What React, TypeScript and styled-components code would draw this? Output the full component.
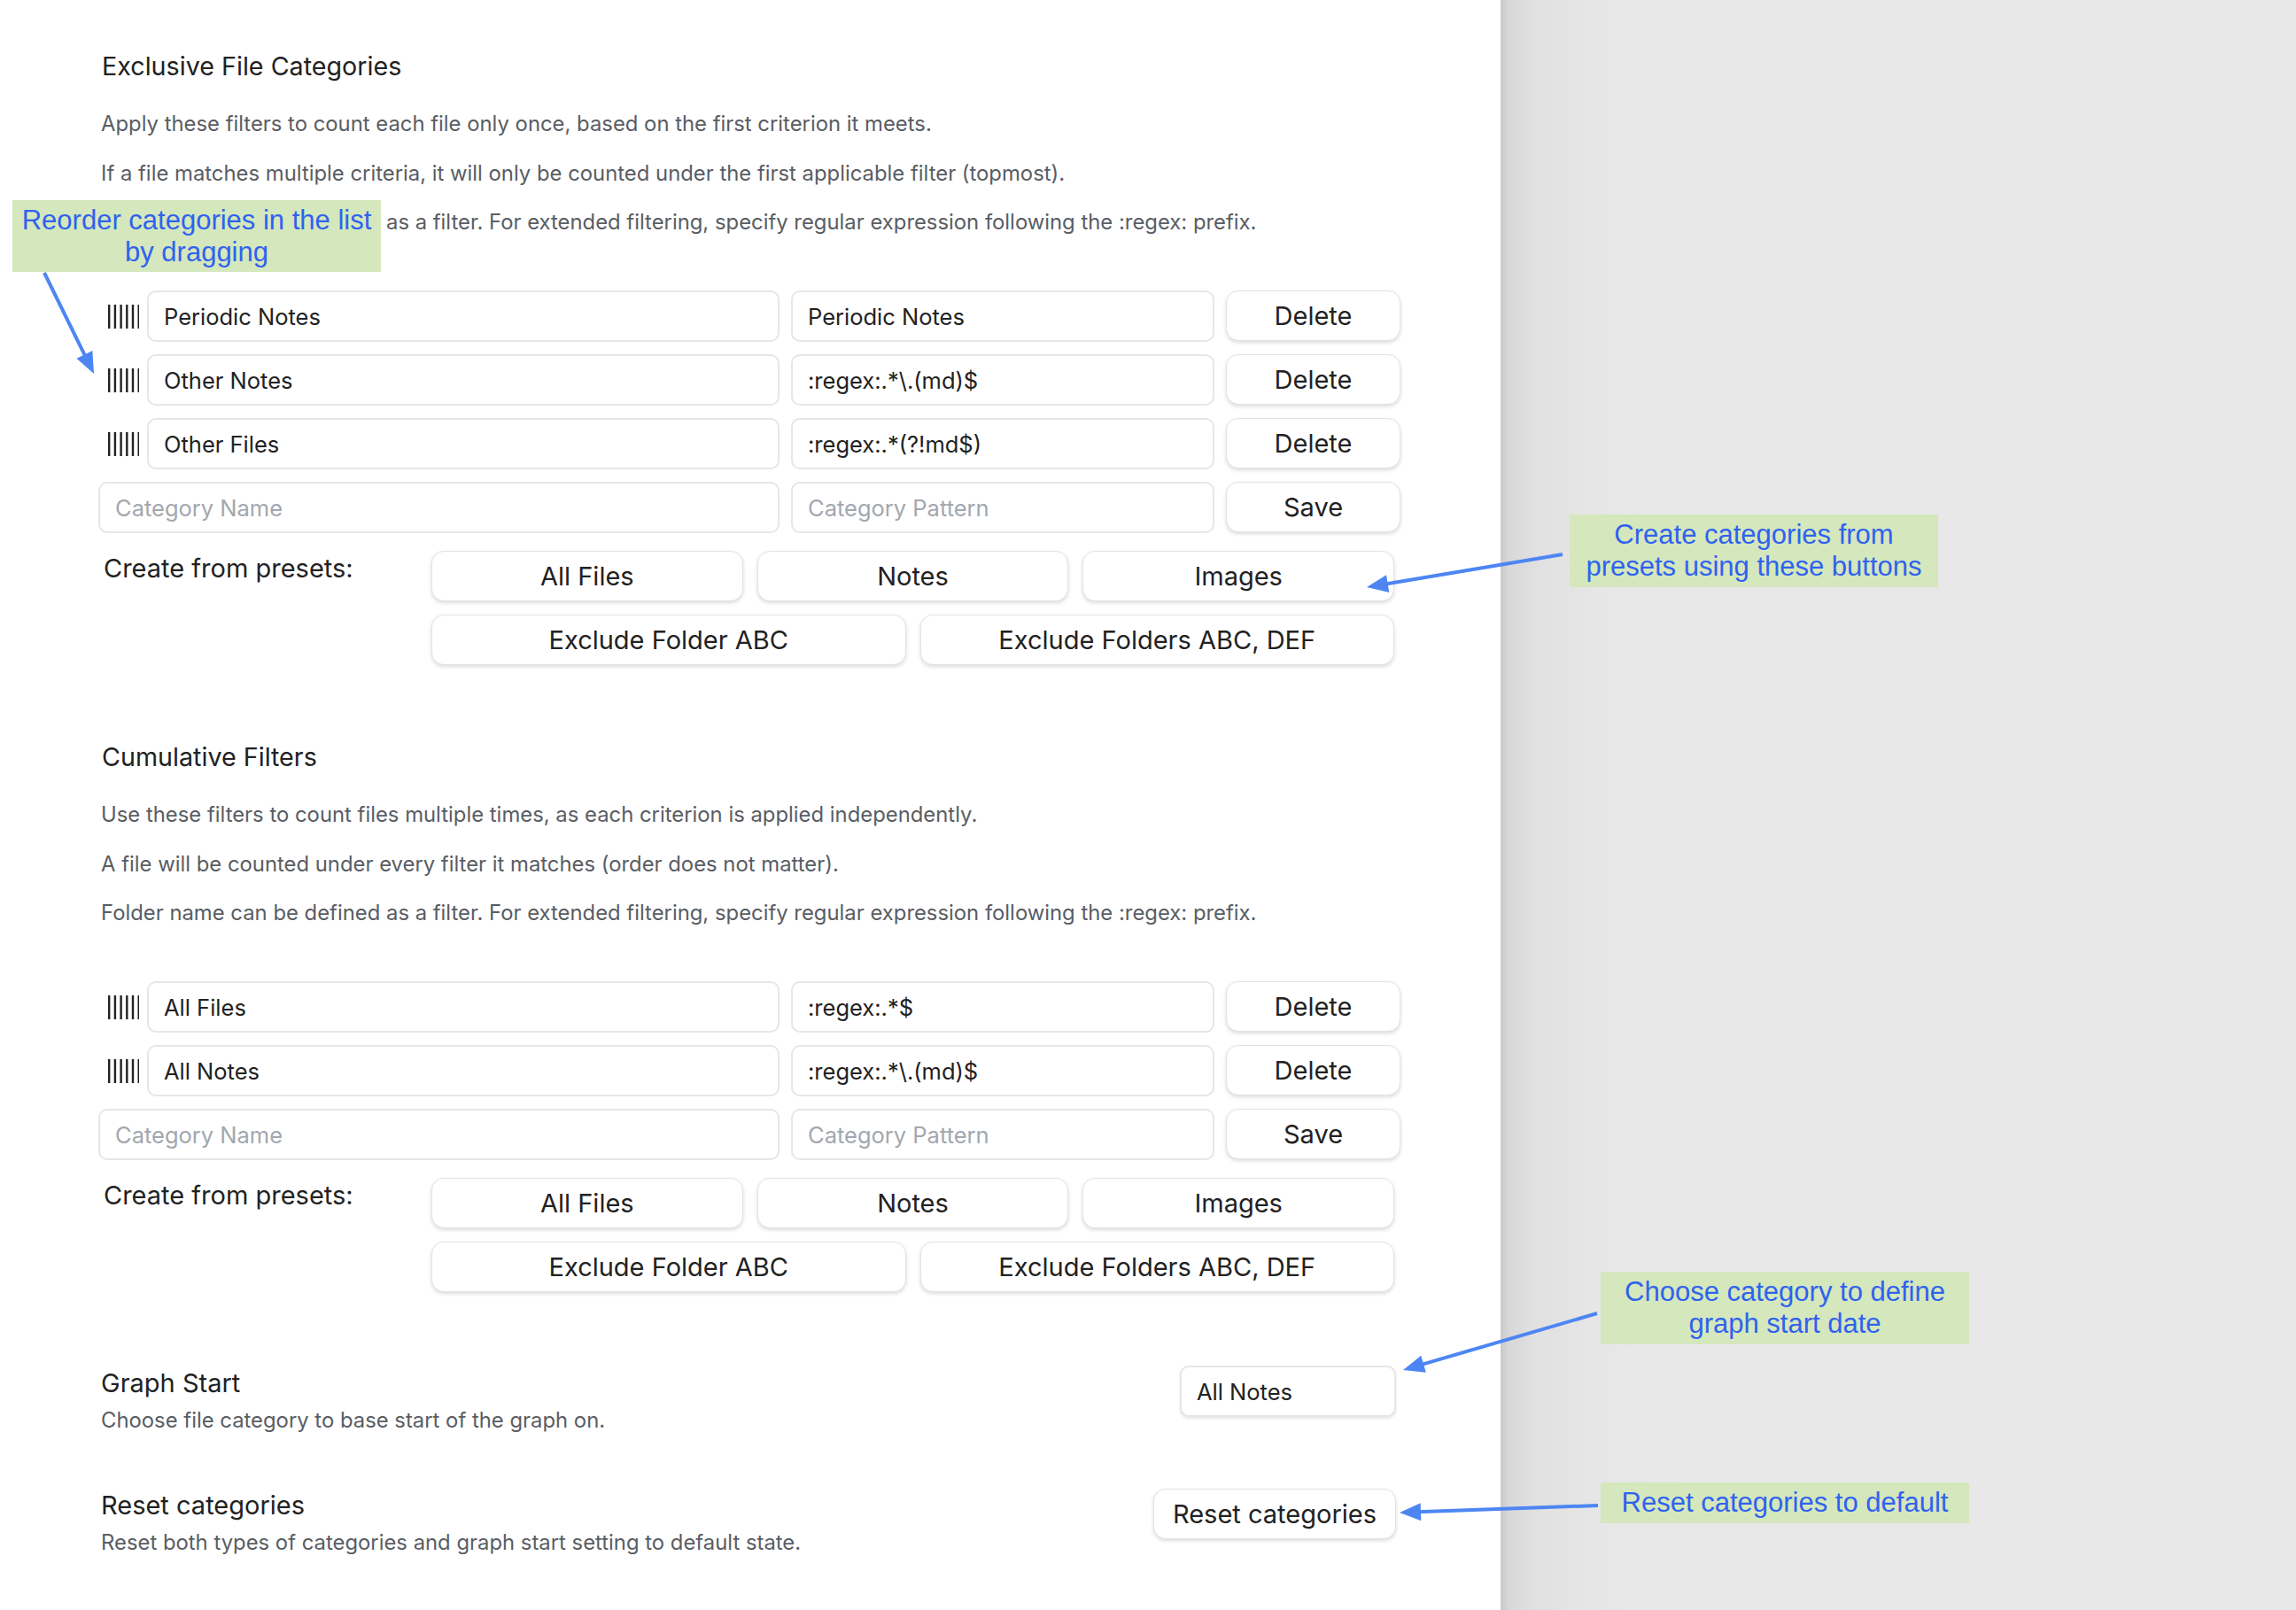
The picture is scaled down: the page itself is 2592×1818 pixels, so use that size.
import React from 'react';
import styled, { createGlobalStyle } from 'styled-components';

const GlobalStyle = createGlobalStyle`
  html, body { margin: 0; padding: 0; }
  body {
    font-family: Inter, "Noto Sans", "Liberation Sans", sans-serif;
    background: #e8e8e8;
  }
  * { box-sizing: border-box; }
`;

const Page = styled.div`
  position: relative;
  display: flex;
  width: 2592px;
  height: 1818px;
  overflow: hidden;
`;

const Panel = styled.main`
  flex: none;
  width: 1694px;
  background: #ffffff;
  padding: 55px 0 0 111px;
`;

const Side = styled.aside`
  flex: 1;
  background: linear-gradient(
    to right,
    #c9c9c9 0px,
    #d8d8d8 10px,
    #e1e1e1 40px,
    #e7e7e7 120px,
    #e8e8e8 200px
  );
`;

const Content = styled.div`
  width: 1470px;
  display: flex;
  flex-direction: column;
`;

const Section = styled.section`
  display: flex;
  flex-direction: column;
  & + & {
    margin-top: 84px;
  }
`;

const SectionTitle = styled.h2`
  margin: 0;
  padding-left: 4px;
  font-size: 28.7px;
  line-height: 40px;
  font-weight: 400;
  color: #222222;
`;

const DescList = styled.div`
  margin-top: 29px;
  display: flex;
  flex-direction: column;
  gap: 23.5px;
`;

const Desc = styled.p`
  margin: 0;
  padding-left: 3px;
  font-size: 23.85px;
  line-height: 32px;
  color: #5a5d63;
`;

const RowList = styled.div`
  margin-top: 61px;
  display: flex;
  flex-direction: column;
  gap: 14px;
`;

const Row = styled.div`
  display: flex;
  align-items: stretch;
  gap: 13px;
  height: 58px;
`;

const Handle = styled.div`
  flex: none;
  width: 42px;
  display: flex;
  align-items: center;
  padding-left: 10px;
  overflow: visible;
  color: #222;
  & > svg {
    flex: none;
  }
`;

const Field = styled.input<{ $wide?: boolean }>`
  ${(p) => (p.$wide ? 'flex: 1; min-width: 0;' : 'flex: none; width: 478px;')}
  height: 58px;
  border: 2px solid #e6e6e9;
  border-radius: 10px;
  background: #fff;
  padding: 0 17px;
  font-family: Inter, "Noto Sans", sans-serif;
  font-size: 25.5px;
  color: #222222;
  outline: none;
  &::placeholder {
    color: #a2a7af;
  }
`;

const Button = styled.button`
  font-family: Inter, "Noto Sans", sans-serif;
  background: #ffffff;
  border: 1px solid #e3e3e3;
  border-radius: 14px;
  box-shadow: 0 2px 4px rgba(0, 0, 0, 0.14);
  color: #222222;
  font-size: 29px;
  cursor: pointer;
  padding: 0;
`;

const RowButton = styled(Button)`
  flex: none;
  width: 197px;
  height: 57px;
`;

const Presets = styled.div`
  margin-top: 20px;
  display: flex;
  align-items: flex-start;
`;

const PresetLabel = styled.div`
  flex: none;
  width: 376px;
  padding-left: 6px;
  font-size: 29px;
  line-height: 40px;
  color: #222222;
`;

const PresetGrid = styled.div`
  flex: 1;
  display: flex;
  flex-wrap: wrap;
  gap: 15px 16px;
  padding-right: 7px;
`;

const PresetButton = styled(Button)`
  flex: 1 1 30%;
  height: 57px;
`;

const SettingRow = styled.div<{ $gapTop: number }>`
  margin-top: ${(p) => p.$gapTop}px;
  display: flex;
  justify-content: space-between;
  align-items: flex-start;
  padding-right: 5px;
`;

const SettingInfo = styled.div`
  display: flex;
  flex-direction: column;
  gap: 6px;
`;

const SettingName = styled.div`
  padding-left: 3px;
  font-size: 29px;
  line-height: 40px;
  color: #222222;
`;

const SettingDesc = styled.div`
  padding-left: 3px;
  font-size: 23.85px;
  line-height: 32px;
  color: #5a5d63;
`;

const Dropdown = styled.select`
  appearance: none;
  -webkit-appearance: none;
  width: 244px;
  height: 58px;
  border: 2px solid #e6e6e9;
  border-radius: 10px;
  box-shadow: 0 2px 3px rgba(0, 0, 0, 0.1);
  background: #fff;
  padding: 0 17px;
  font-family: Inter, "Noto Sans", sans-serif;
  font-size: 25.5px;
  color: #222222;
  outline: none;
`;

const ResetButton = styled(Button)`
  margin-top: 1px;
  width: 274px;
  height: 57px;
`;

const Note = styled.div<{ $x: number; $y: number; $h: number }>`
  position: absolute;
  left: ${(p) => p.$x}px;
  top: ${(p) => p.$y}px;
  width: 416px;
  height: ${(p) => p.$h}px;
  background: #d4e7bd;
  color: #2f62ee;
  font-family: "Liberation Sans", Arial, sans-serif;
  font-size: 31px;
  line-height: 36px;
  text-align: center;
  display: flex;
  align-items: center;
  justify-content: center;
  padding: 0 4px;
`;

const Overlay = styled.svg`
  position: absolute;
  left: 0;
  top: 0;
  pointer-events: none;
`;

const GripIcon = () => (
  <svg width="36" height="27" viewBox="0 0 36 27" aria-hidden>
    {[0, 1, 2, 3, 4, 5].map((i) => (
      <rect key={i} x={1 + i * 6.7} y={0} width={2.4} height={27} fill="#222" />
    ))}
  </svg>
);

type Arrow = { x1: number; y1: number; x2: number; y2: number };

const arrows: Arrow[] = [
  { x1: 50, y1: 308, x2: 106, y2: 422 },
  { x1: 1764, y1: 626, x2: 1543, y2: 663 },
  { x1: 1803, y1: 1483, x2: 1584, y2: 1547 },
  { x1: 1804, y1: 1700, x2: 1580, y2: 1708 },
];

const ArrowShape = ({ x1, y1, x2, y2 }: Arrow) => {
  const dx = x2 - x1;
  const dy = y2 - y1;
  const len = Math.hypot(dx, dy);
  const ux = dx / len;
  const uy = dy / len;
  const L = 24;
  const W = 10;
  const bx = x2 - ux * L;
  const by = y2 - uy * L;
  const nx = -uy;
  const ny = ux;
  const pts = `${x2},${y2} ${bx + nx * W},${by + ny * W} ${bx - nx * W},${by - ny * W}`;
  return (
    <g>
      <line x1={x1} y1={y1} x2={bx + ux * 4} y2={by + uy * 4} stroke="#4d86f3" strokeWidth={4} />
      <polygon points={pts} fill="#4d86f3" />
    </g>
  );
};

type Item = { name: string; pattern: string };

const exclusive: Item[] = [
  { name: 'Periodic Notes', pattern: 'Periodic Notes' },
  { name: 'Other Notes', pattern: ':regex:.*\\.(md)$' },
  { name: 'Other Files', pattern: ':regex:.*(?!md$)' },
];

const cumulative: Item[] = [
  { name: 'All Files', pattern: ':regex:.*$' },
  { name: 'All Notes', pattern: ':regex:.*\\.(md)$' },
];

const presetNames = ['All Files', 'Notes', 'Images', 'Exclude Folder ABC', 'Exclude Folders ABC, DEF'];

const CategorySection = ({
  title,
  descs,
  items,
}: {
  title: string;
  descs: string[];
  items: Item[];
}) => (
  <Section>
    <SectionTitle>{title}</SectionTitle>
    <DescList>
      {descs.map((d) => (
        <Desc key={d}>{d}</Desc>
      ))}
    </DescList>
    <RowList>
      {items.map((it) => (
        <Row key={it.name}>
          <Handle>
            <GripIcon />
          </Handle>
          <Field $wide defaultValue={it.name} />
          <Field defaultValue={it.pattern} />
          <RowButton>Delete</RowButton>
        </Row>
      ))}
      <Row>
        <Field $wide placeholder="Category Name" />
        <Field placeholder="Category Pattern" />
        <RowButton>Save</RowButton>
      </Row>
    </RowList>
    <Presets>
      <PresetLabel>Create from presets:</PresetLabel>
      <PresetGrid>
        {presetNames.map((p) => (
          <PresetButton key={p}>{p}</PresetButton>
        ))}
      </PresetGrid>
    </Presets>
  </Section>
);

export default function App() {
  return (
    <>
      <GlobalStyle />
      <Page>
        <Panel>
          <Content>
            <CategorySection
              title="Exclusive File Categories"
              descs={[
                'Apply these filters to count each file only once, based on the first criterion it meets.',
                'If a file matches multiple criteria, it will only be counted under the first applicable filter (topmost).',
                'Folder name can be defined as a filter. For extended filtering, specify regular expression following the :regex: prefix.',
              ]}
              items={exclusive}
            />
            <CategorySection
              title="Cumulative Filters"
              descs={[
                'Use these filters to count files multiple times, as each criterion is applied independently.',
                'A file will be counted under every filter it matches (order does not matter).',
                'Folder name can be defined as a filter. For extended filtering, specify regular expression following the :regex: prefix.',
              ]}
              items={cumulative}
            />
            <SettingRow $gapTop={83}>
              <SettingInfo>
                <SettingName>Graph Start</SettingName>
                <SettingDesc>Choose file category to base start of the graph on.</SettingDesc>
              </SettingInfo>
              <Dropdown defaultValue="All Notes">
                <option>All Files</option>
                <option>All Notes</option>
              </Dropdown>
            </SettingRow>
            <SettingRow $gapTop={60}>
              <SettingInfo>
                <SettingName>Reset categories</SettingName>
                <SettingDesc>Reset both types of categories and graph start setting to default state.</SettingDesc>
              </SettingInfo>
              <ResetButton>Reset categories</ResetButton>
            </SettingRow>
          </Content>
        </Panel>
        <Side />
        <Note $x={14} $y={226} $h={81}>
          Reorder categories in the list by dragging
        </Note>
        <Note $x={1772} $y={581} $h={82}>
          Create categories from presets using these buttons
        </Note>
        <Note $x={1807} $y={1436} $h={82}>
          Choose category to define graph start date
        </Note>
        <Note $x={1807} $y={1674} $h={46}>
          Reset categories to default
        </Note>
        <Overlay width={2592} height={1818} viewBox="0 0 2592 1818">
          {arrows.map((a, i) => (
            <ArrowShape key={i} {...a} />
          ))}
        </Overlay>
      </Page>
    </>
  );
}
